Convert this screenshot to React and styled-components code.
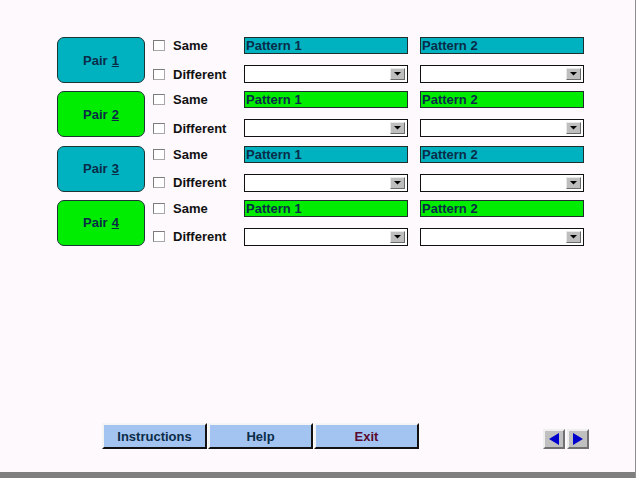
import React from 'react'
import styled, { createGlobalStyle } from 'styled-components'

const GlobalStyle = createGlobalStyle`
    html, body {
        margin: 0;
        padding: 0;
        background: #fdf9fd;
    }
    body {
        font-family: "Liberation Sans", Arial, sans-serif;
    }
`

const pairs = [
    { id: 1, color: '#00b1c0' },
    { id: 2, color: '#00ec00' },
    { id: 3, color: '#00b1c0' },
    { id: 4, color: '#00ec00' },
]

function Choice({ label }) {
    return (
        <ChoiceLabel>
            <Box />
            <span>{label}</span>
        </ChoiceLabel>
    )
}

function Dropdown() {
    return (
        <Select>
            <DropButton>
                <svg width="7" height="4" viewBox="0 0 7 4">
                    <path d="M0 0h7L3.5 3.5z" fill="#000" />
                </svg>
            </DropButton>
        </Select>
    )
}

function App() {
    return (
        <Screen>
            <GlobalStyle />
            <Main>
                {pairs.map(p => (
                    <PairBlock key={p.id}>
                        <PairButton color={p.color}>
                            Pair <u>{p.id}</u>
                        </PairButton>
                        <Options>
                            <Choice label="Same" />
                            <Pattern color={p.color}>Pattern 1</Pattern>
                            <Pattern color={p.color}>Pattern 2</Pattern>
                            <Choice label="Different" />
                            <Dropdown />
                            <Dropdown />
                        </Options>
                    </PairBlock>
                ))}
            </Main>
            <Footer>
                <ButtonGroup>
                    <FooterButton>Instructions</FooterButton>
                    <FooterButton>Help</FooterButton>
                    <FooterButton exit>Exit</FooterButton>
                </ButtonGroup>
                <Nav>
                    <NavButton>
                        <svg width="10" height="12" viewBox="0 0 10 12">
                            <path d="M10 0v12L0 6z" fill="#0000cc" />
                        </svg>
                    </NavButton>
                    <NavButton>
                        <svg width="10" height="12" viewBox="0 0 10 12">
                            <path d="M0 0v12l10-6z" fill="#0000cc" />
                        </svg>
                    </NavButton>
                </Nav>
            </Footer>
            <BottomBar />
        </Screen>
    )
}

export default App

const Screen = styled.div`
    width: 636px;
    height: 478px;
    box-sizing: border-box;
    border-right: 1px solid #8e8e8e;
    display: flex;
    flex-direction: column;
    background: #fdf9fd;
`
const Main = styled.div`
    padding: 37px 0 0 57px;
    display: flex;
    flex-direction: column;
`
const PairBlock = styled.div`
    display: flex;
    height: 54.33px;
`
const PairButton = styled.div`
    width: 88px;
    height: 46px;
    box-sizing: border-box;
    background: ${props => props.color};
    border: 1px solid #1c3434;
    border-radius: 7px;
    display: flex;
    align-items: center;
    justify-content: center;
    font-weight: bold;
    font-size: 13px;
    color: #0a2c48;
    u {
        margin-left: 4px;
    }
`
const Options = styled.div`
    margin-left: 8px;
    display: grid;
    grid-template-columns: 79px 164px 164px;
    grid-template-rows: 17px 18px;
    column-gap: 12px;
    row-gap: 11px;
    align-content: start;
`
const ChoiceLabel = styled.label`
    display: flex;
    align-items: center;
    gap: 8px;
    font-weight: bold;
    font-size: 13px;
    color: #111;
`
const Box = styled.span`
    width: 12px;
    height: 11px;
    box-sizing: border-box;
    border: 1px solid #7c7c7c;
    border-right-color: #a8a8a8;
    border-bottom-color: #a8a8a8;
    background: #fff;
`
const Pattern = styled.div`
    box-sizing: border-box;
    height: 17px;
    background: ${props => props.color};
    border: 1px solid #1e2e2e;
    padding-left: 1px;
    font-weight: bold;
    font-size: 13px;
    line-height: 15px;
    color: #0a2c48;
`
const Select = styled.div`
    box-sizing: border-box;
    height: 18px;
    background: #fff;
    border: 1px solid #111;
    display: flex;
    justify-content: flex-end;
    align-items: center;
    padding-right: 2px;
`
const DropButton = styled.div`
    width: 15px;
    height: 12px;
    box-sizing: border-box;
    background: #bebebe;
    border: 1px solid;
    border-color: #e8e8e8 #6a6a6a #6a6a6a #e8e8e8;
    display: flex;
    align-items: center;
    justify-content: center;
`
const Footer = styled.div`
    margin-top: auto;
    margin-bottom: 23px;
    padding: 0 46px 0 102px;
    display: flex;
    align-items: flex-start;
`
const ButtonGroup = styled.div`
    display: flex;
    gap: 1px;
`
const FooterButton = styled.button`
    width: 105px;
    height: 26px;
    box-sizing: border-box;
    background: #a3c3f1;
    border: 2px solid;
    border-color: #f4f4f4 #111 #111 #f4f4f4;
    padding: 0;
    font-family: "Liberation Sans", Arial, sans-serif;
    font-weight: bold;
    font-size: 13px;
    color: ${props => props.exit ? '#5a0a2e' : '#0a2c48'};
`
const Nav = styled.div`
    margin-left: auto;
    margin-top: 6px;
    display: flex;
    gap: 2px;
`
const NavButton = styled.button`
    width: 22px;
    height: 20px;
    box-sizing: border-box;
    padding: 0;
    background: #c0c0c0;
    border: 2px solid;
    border-color: #f0f0f0 #707070 #707070 #f0f0f0;
    display: flex;
    align-items: center;
    justify-content: center;
`
const BottomBar = styled.div`
    height: 6px;
    background: #7f7f7f;
`
